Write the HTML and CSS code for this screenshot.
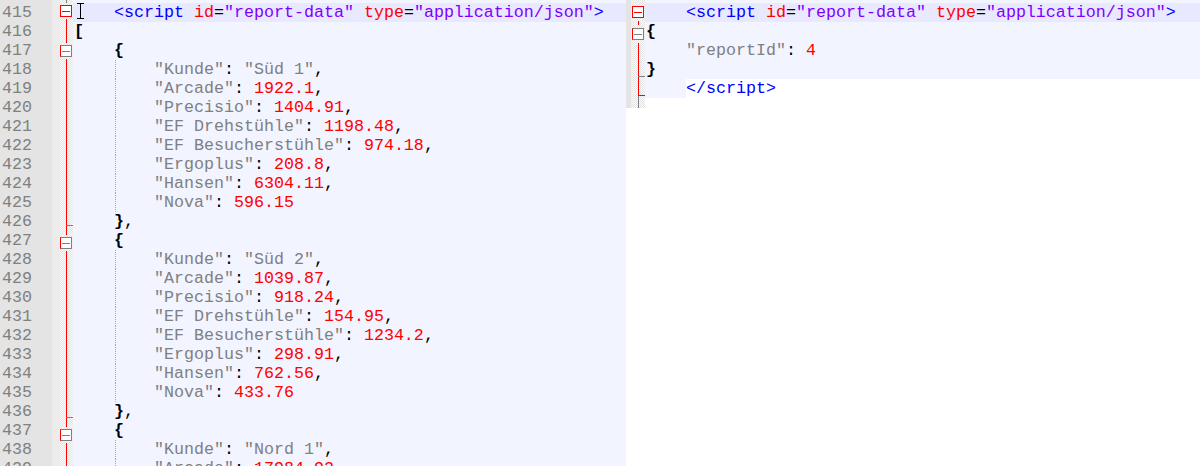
FILE: index.html
```html
<!DOCTYPE html>
<html>
<head>
<meta charset="utf-8">
<title>Editor</title>
<link rel="stylesheet" href="styles.css">
</head>
<body>
<div class="editor">
  <div class="pane pane-left">
    <div class="linenos">
      <div class="sp"></div>
      <div>415</div><div>416</div><div>417</div><div>418</div><div>419</div>
      <div>420</div><div>421</div><div>422</div><div>423</div><div>424</div>
      <div>425</div><div>426</div><div>427</div><div>428</div><div>429</div>
      <div>430</div><div>431</div><div>432</div><div>433</div><div>434</div>
      <div>435</div><div>436</div><div>437</div><div>438</div><div>439</div>
    </div>
    <div class="symbols"></div>
    <div class="fold fold-left">
      <div class="sp top"></div>
      <div class="r b0"><span class="box red"></span></div>
      <div class="r v"></div>
      <div class="r b1"><span class="box gray"></span></div>
      <div class="r v"></div><div class="r v"></div><div class="r v"></div><div class="r v"></div>
      <div class="r v"></div><div class="r v"></div><div class="r v"></div><div class="r v"></div>
      <div class="r vt"></div>
      <div class="r b1"><span class="box gray"></span></div>
      <div class="r v"></div><div class="r v"></div><div class="r v"></div><div class="r v"></div>
      <div class="r v"></div><div class="r v"></div><div class="r v"></div><div class="r v"></div>
      <div class="r vt"></div>
      <div class="r b1"><span class="box gray"></span></div>
      <div class="r v"></div>
      <div class="r v"></div>
    </div>
    <div class="code code-left">
      <div class="sp"></div>
      <div class="ln cur">    <span class="t">&lt;script</span> <span class="a">id</span>=<span class="v">"report-data"</span> <span class="a">type</span>=<span class="v">"application/json"</span><span class="t">&gt;</span></div>
      <div class="ln"><span class="o">[</span></div>
      <div class="ln">    <span class="o">{</span></div>
      <div class="ln g">        <span class="k">"Kunde"</span>: <span class="k">"Süd 1"</span>,</div>
      <div class="ln g">        <span class="k">"Arcade"</span>: <span class="n">1922.1</span>,</div>
      <div class="ln g">        <span class="k">"Precisio"</span>: <span class="n">1404.91</span>,</div>
      <div class="ln g">        <span class="k">"EF Drehstühle"</span>: <span class="n">1198.48</span>,</div>
      <div class="ln g">        <span class="k">"EF Besucherstühle"</span>: <span class="n">974.18</span>,</div>
      <div class="ln g">        <span class="k">"Ergoplus"</span>: <span class="n">208.8</span>,</div>
      <div class="ln g">        <span class="k">"Hansen"</span>: <span class="n">6304.11</span>,</div>
      <div class="ln g">        <span class="k">"Nova"</span>: <span class="n">596.15</span></div>
      <div class="ln">    <span class="o">}</span>,</div>
      <div class="ln">    <span class="o">{</span></div>
      <div class="ln g">        <span class="k">"Kunde"</span>: <span class="k">"Süd 2"</span>,</div>
      <div class="ln g">        <span class="k">"Arcade"</span>: <span class="n">1039.87</span>,</div>
      <div class="ln g">        <span class="k">"Precisio"</span>: <span class="n">918.24</span>,</div>
      <div class="ln g">        <span class="k">"EF Drehstühle"</span>: <span class="n">154.95</span>,</div>
      <div class="ln g">        <span class="k">"EF Besucherstühle"</span>: <span class="n">1234.2</span>,</div>
      <div class="ln g">        <span class="k">"Ergoplus"</span>: <span class="n">298.91</span>,</div>
      <div class="ln g">        <span class="k">"Hansen"</span>: <span class="n">762.56</span>,</div>
      <div class="ln g">        <span class="k">"Nova"</span>: <span class="n">433.76</span></div>
      <div class="ln">    <span class="o">}</span>,</div>
      <div class="ln">    <span class="o">{</span></div>
      <div class="ln g">        <span class="k">"Kunde"</span>: <span class="k">"Nord 1"</span>,</div>
      <div class="ln g">        <span class="k">"Arcade"</span>: <span class="n">17984.93</span>,</div>
    </div>
  </div>
  <div class="pane pane-right">
    <div class="strip"></div>
    <div class="fold fold-right">
      <div class="sp"></div>
      <div class="r r0"><span class="box red"></span></div>
      <div class="r r1"><span class="box gray"></span></div>
      <div class="r v"></div>
      <div class="r vt"></div>
      <div class="r end"></div>
      <div class="r gv"></div>
    </div>
    <div class="code code-right">
      <div class="sp js"></div>
      <div class="ln cur">    <span class="t">&lt;script</span> <span class="a">id</span>=<span class="v">"report-data"</span> <span class="a">type</span>=<span class="v">"application/json"</span><span class="t">&gt;</span></div>
      <div class="ln js"><span class="o">{</span></div>
      <div class="ln js">    <span class="k">"reportId"</span>: <span class="n">4</span></div>
      <div class="ln js"><span class="o">}</span></div>
      <div class="ln nopad"><span class="jsind">    </span><span class="t">&lt;/script&gt;</span></div>
    </div>
  </div>
  <svg class="ibeam" width="7" height="16" viewBox="0 0 7 16" aria-hidden="true"><path d="M0 0.5H7M3.5 0.5V15.5M0 15.5H7" stroke="#000" stroke-width="1" fill="none"/></svg>
</div>
</body>
</html>
```

FILE: styles.css
```css
* { box-sizing: border-box; }
html, body { margin: 0; padding: 0; }
body {
  width: 1200px;
  height: 466px;
  overflow: hidden;
  background: #ffffff;
  font-family: "Liberation Mono", "Courier New", monospace;
  font-size: 16.67px;
  color: #000;
}
.editor {
  position: relative;
  display: flex;
  height: 466px;
}
.pane { display: flex; height: 466px; overflow: hidden; }
.pane-left { width: 626px; flex: none; }
.pane-right { flex: 1; align-items: flex-start; }

.sp { height: 3px; }

.linenos {
  width: 52px;
  flex: none;
  background: #e4e4e4;
  color: #808080;
  text-align: right;
  padding-right: 20px;
}
.linenos div { height: 19px; line-height: 19px; }
.linenos .sp { height: 3px; }
.symbols { width: 8px; flex: none; background: #ececec; }

.fold {
  flex: none;
  background: repeating-conic-gradient(#e4e4e4 0 25%, #fbfbfb 0 50%) 0 0 / 2px 2px;
}
.fold .r { height: 19px; background-repeat: no-repeat; }
.box {
  display: block;
  width: 12px;
  height: 12px;
  border: 1px solid #808080;
}
.box.red {
  border-color: #ff0000;
  background: linear-gradient(#ff0000, #ff0000) center / 8px 1px no-repeat, #ffffff;
}
.box.gray {
  border-color: #808080;
  border-left-color: #ff0000;
  background: linear-gradient(#808080, #808080) center / 8px 1px no-repeat, #ffffff;
}

/* left fold margin: guide at x offset 6 */
.fold-left { width: 13px; }
.fold-left .top { background: linear-gradient(#808080, #808080) 6px 0 / 1px 3px no-repeat; }
.fold-left .box { margin-top: 2px; }
.fold-left .v { background-image: linear-gradient(#ff0000, #ff0000); background-position: 6px 0; background-size: 1px 19px; }
.fold-left .vt {
  background-image: linear-gradient(#808080, #808080), linear-gradient(#ff0000, #ff0000);
  background-position: 6px 9px, 6px 0;
  background-size: 7px 1px, 1px 19px;
}
.fold-left .b0 {
  background-image: linear-gradient(#808080, #808080), linear-gradient(#ff0000, #ff0000);
  background-position: 6px 0, 6px 14px;
  background-size: 1px 2px, 1px 5px;
}
.fold-left .b1 {
  background-image: linear-gradient(#ff0000, #ff0000), linear-gradient(#ff0000, #ff0000);
  background-position: 6px 0, 6px 14px;
  background-size: 1px 2px, 1px 5px;
}

/* right pane margins */
.strip { width: 5px; height: 108px; flex: none; background: #e4e4e4; }
.fold-right { width: 14px; height: 108px; overflow: hidden; }
.fold-right .box { margin: 3px 0 0 1px; }
.fold-right .r0 {
  background-image: linear-gradient(#ff0000, #ff0000);
  background-position: 7px 15px;
  background-size: 1px 4px;
}
.fold-right .r1 {
  background-image: linear-gradient(#ff0000, #ff0000), linear-gradient(#ff0000, #ff0000);
  background-position: 7px 0, 7px 15px;
  background-size: 1px 3px, 1px 4px;
}
.fold-right .v { background-image: linear-gradient(#ff0000, #ff0000); background-position: 7px 0; background-size: 1px 19px; }
.fold-right .vt {
  background-image: linear-gradient(#808080, #808080), linear-gradient(#ff0000, #ff0000);
  background-position: 7px 10px, 7px 0;
  background-size: 7px 1px, 1px 19px;
}
.fold-right .end {
  background-image: linear-gradient(#ff0000, #ff0000), linear-gradient(#ff0000, #ff0000), linear-gradient(#808080, #808080);
  background-position: 7px 0, 7px 10px, 7px 11px;
  background-size: 1px 10px, 7px 1px, 1px 8px;
}
.fold-right .gv { background-image: linear-gradient(#808080, #808080); background-position: 7px 0; background-size: 1px 19px; }

/* code areas */
.code { flex: 1; min-width: 0; }
.code-left { background: #f2f4ff; }
.code-right { background: #ffffff; }
.ln {
  height: 19px;
  line-height: 19px;
  white-space: pre;
  padding-left: 1px;
}
.ln.cur { background-color: #e8e8ff; }
.js { background-color: #f2f4ff; }
.ln.nopad { padding-left: 0; }
.jsind { background: #f2f4ff; padding-left: 1px; }
.ln.g {
  background-image: linear-gradient(#a8a8a8 50%, transparent 50%);
  background-size: 1px 2px;
  background-repeat: repeat-y;
  background-position: 42px 0;
}

.t { color: #0000ff; }
.a { color: #ff0000; }
.v { color: #8000ff; }
.k { color: #808080; }
.n { color: #ff0000; }
.o { font-weight: bold; color: #000000; }

.ibeam {
  position: absolute;
  left: 77px;
  top: 3px;
}
```
